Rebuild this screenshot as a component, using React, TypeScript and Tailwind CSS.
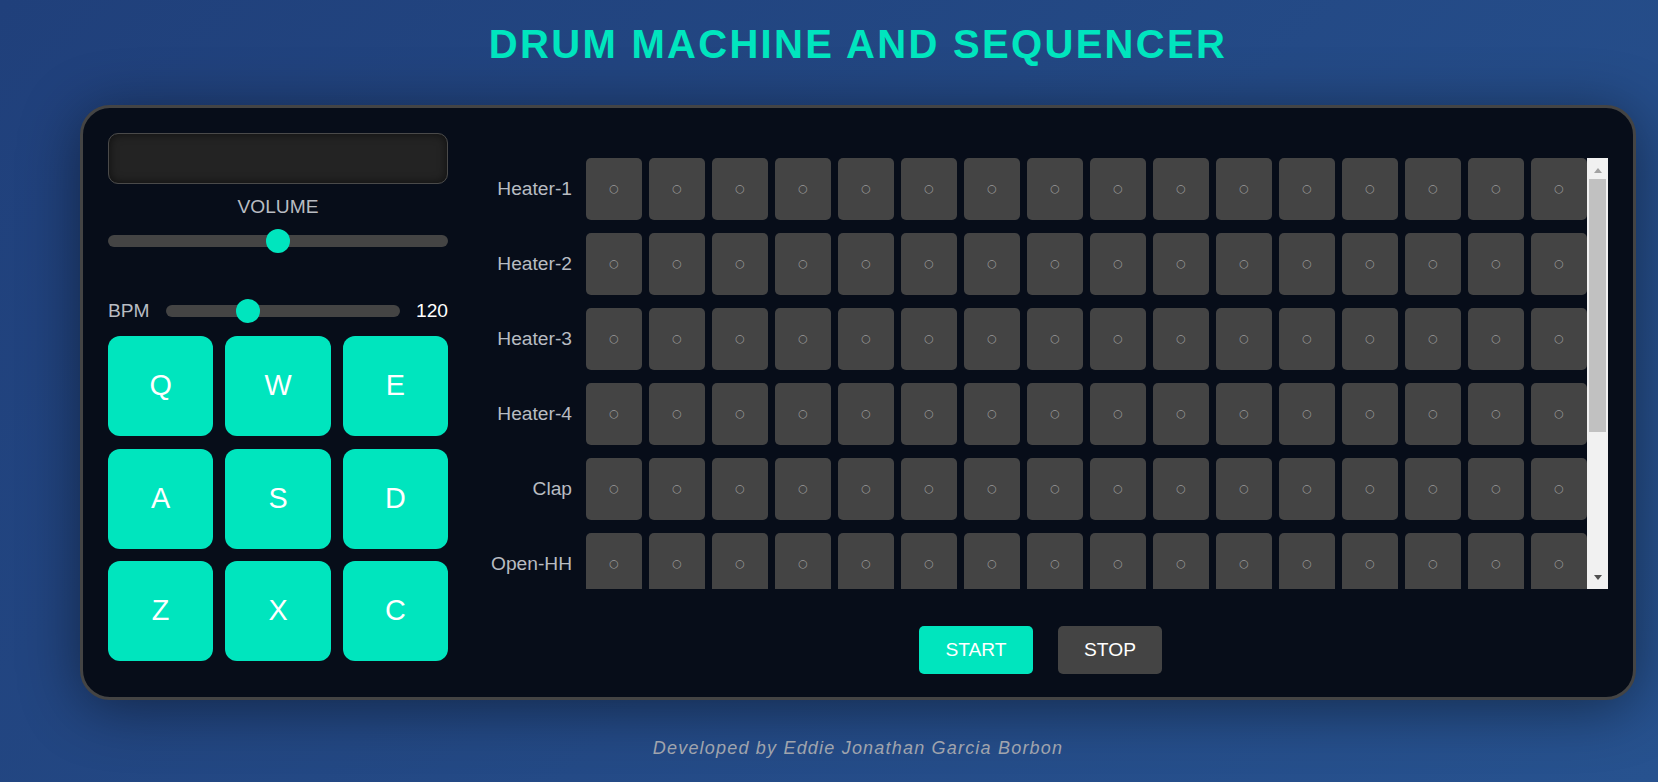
import React from "react";

const sounds = [
  "Heater-1",
  "Heater-2",
  "Heater-3",
  "Heater-4",
  "Clap",
  "Open-HH",
  "Kick-n'-Hat",
  "Kick",
  "Closed-HH",
];

const keys = ["Q", "W", "E", "A", "S", "D", "Z", "X", "C"];

const steps = Array.from({ length: 16 }, (_, i) => i);

const Slider = ({ value, className }: { value: number; className?: string }) => (
  <div className={`relative flex h-[24px] items-center ${className ?? ""}`}>
    <div className="h-[12px] w-full rounded-full bg-[#444]" />
    <div
      className="absolute top-0 size-[24px] rounded-full bg-[#00e5be]"
      style={{ left: `calc(${value} * (100% - 24px))` }}
    />
  </div>
);

export default function App() {
  return (
    <div className="min-h-screen w-full bg-[linear-gradient(135deg,#20407b,#27528f)] font-['Liberation_Sans',Arial,sans-serif]">
      <div className="pl-[80px] pr-[22px] pt-[21px] pb-[20px]">
        <h1 className="text-center text-[40px] font-bold leading-[46px] tracking-[2.3px] text-[#00e5be]">
          DRUM MACHINE AND SEQUENCER
        </h1>

        <div className="mt-[38px] flex items-start gap-[25px] rounded-[30px] border-[3px] border-[#444] bg-[#070d19] px-[25px] pt-[25px] pb-[23px] shadow-[0_8px_60px_rgba(0,0,0,0.45)]">
          {/* left: display, volume, bpm, pads */}
          <div className="flex w-[340px] shrink-0 flex-col pb-[13px]">
            <div className="h-[51px] rounded-[10px] border border-[#4a4a4a] bg-[#232323] shadow-[inset_0_0_10px_rgba(0,0,0,0.6)]" />
            <div className="mt-[12px] text-center text-[19.2px] leading-[22px] text-[#b8bcc2]">VOLUME</div>
            <Slider value={0.5} className="mt-[11px]" />
            <div className="mt-[46px] flex h-[24px] items-center gap-4">
              <span className="text-[19.2px] leading-[22px] text-[#b8bcc2]">BPM</span>
              <Slider value={1 / 3} className="flex-1" />
              <span className="text-[19.2px] leading-[22px] text-white">120</span>
            </div>
            <div className="mt-[13px] grid grid-cols-3 grid-rows-[repeat(3,100px)] gap-x-3 gap-y-[12.5px]">
              {keys.map((k) => (
                <button
                  key={k}
                  className="flex items-center justify-center rounded-[12px] bg-[#00e5be] text-[28.8px] text-white"
                >
                  {k}
                </button>
              ))}
            </div>
          </div>

          {/* right: sequencer */}
          <div className="flex flex-1 flex-col pt-[25px]">
            <div className="flex h-[431px]">
              <div className="flex-1 overflow-hidden">
                <div className="flex flex-col gap-[13px]">
                  {sounds.map((s) => (
                    <div key={s} className="flex items-center">
                      <div className="w-[99px] shrink-0 text-right text-[19.2px] leading-[22px] text-[#b8bcc2]">
                        {s}
                      </div>
                      <div className="ml-[14px] flex gap-[7px]">
                        {steps.map((i) => (
                          <div
                            key={i}
                            className="flex h-[62px] w-[56px] items-center justify-center rounded-[5px] bg-[#444] font-['DejaVu_Sans',sans-serif] text-[11px] text-[#9a9a9a]"
                          >
                            ○
                          </div>
                        ))}
                      </div>
                    </div>
                  ))}
                </div>
              </div>
              {/* scrollbar */}
              <div className="flex w-[21px] shrink-0 flex-col bg-[#f1f1f1]">
                <div className="flex h-[17px] justify-center pt-[10px]">
                  <div className="h-0 w-0 border-x-[4.5px] border-b-[5px] border-x-transparent border-b-[#a3a3a3]" />
                </div>
                <div className="flex-1 px-[2px] pt-[4px]">
                  <div className="h-[253px] bg-[#c1c1c1]" />
                </div>
                <div className="flex h-[17px] justify-center pt-[3px]">
                  <div className="h-0 w-0 border-x-[4.5px] border-t-[5px] border-x-transparent border-t-[#505050]" />
                </div>
              </div>
            </div>

            <div className="mt-[37px] flex justify-center gap-[25px]">
              <button className="h-[48px] w-[114px] rounded-[5px] bg-[#00e5be] text-[19.2px] text-white">START</button>
              <button className="h-[48px] w-[104px] rounded-[5px] bg-[#444] text-[19.2px] text-white">STOP</button>
            </div>
          </div>
        </div>

        <p className="mt-[38px] text-center text-[18px] italic leading-[21px] tracking-[1.2px] text-[#a0a4ad]">
          Developed by Eddie Jonathan Garcia Borbon
        </p>
      </div>
    </div>
  );
}
